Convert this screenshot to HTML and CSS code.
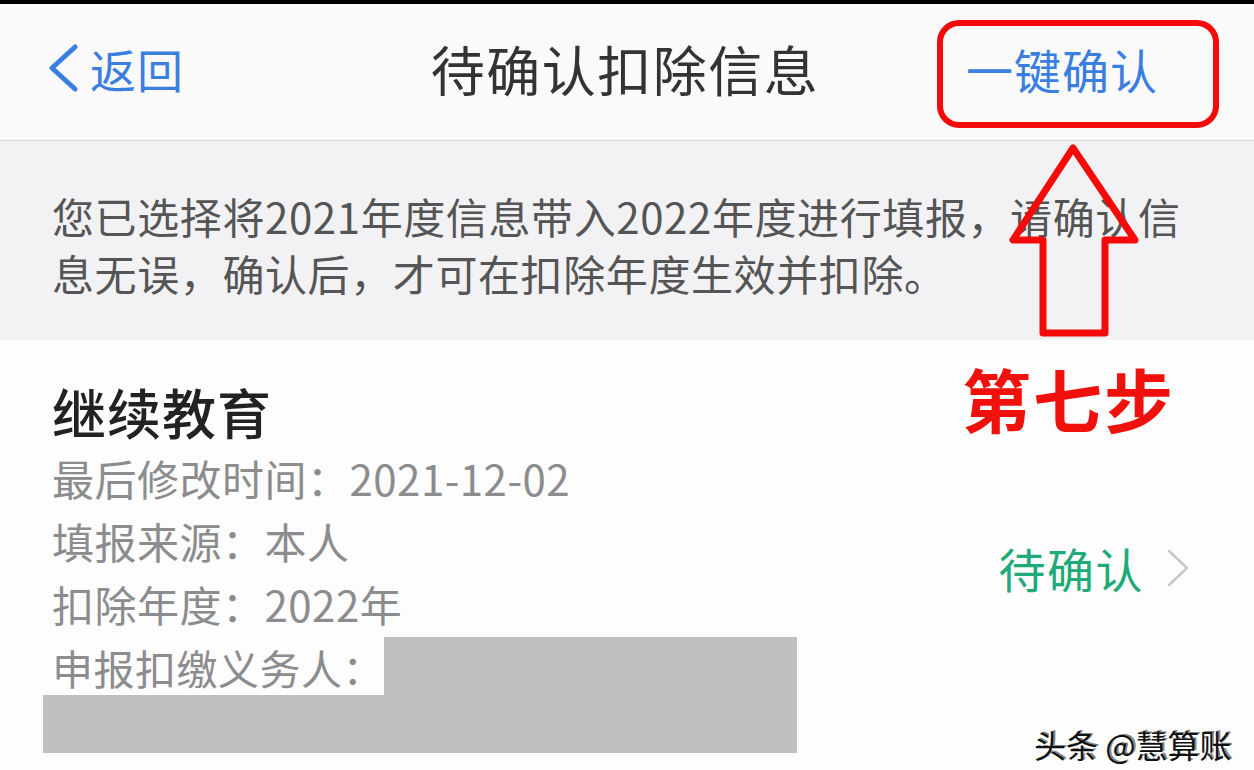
FILE: index.html
```html
<!DOCTYPE html>
<html>
    <head>
        <meta charset="utf-8">
        <title>待确认扣除信息</title>
        <link rel="stylesheet" href="styles.css">
    </head>
    <body>
        <div id="page">
            <div class="topband"></div>
            <div class="nav">
                <div class="back">
                    <svg class="back-icon" width="34" height="48" viewBox="0 0 34 48">
                        <path d="M29 3 L6 24 L29 45" fill="none" stroke="#3a7fe0" stroke-width="5" stroke-linecap="round" stroke-linejoin="round"/>
                    </svg>
                    <span>返回</span>
                </div>
                <div class="title">待确认扣除信息</div>
                <div class="confirm">一键确认</div>
            </div>
            <div class="notice">
                您已选择将2021年度信息带入2022年度进行填报，请确认信息无误，确认后，才可在扣除年度生效并扣除。
            </div>
            <div class="item">
                <div class="item-main">
                    <div class="item-name">继续教育</div>
                    <div class="row">最后修改时间：2021-12-02</div>
                    <div class="row">填报来源：本人</div>
                    <div class="row">扣除年度：2022年</div>
                    <div class="payer">
                        <div class="payer-line">
                            <span class="payer-label">申报扣缴义务人：</span>
                            <span class="mask"></span>
                        </div>
                        <div class="mask mask-low"></div>
                    </div>
                </div>
                <div class="status">
                    <span>待确认</span>
                    <svg width="24" height="38" viewBox="0 0 24 38">
                        <path d="M3 2 L21 19 L3 36" fill="none" stroke="#c8c8cc" stroke-width="2.5" stroke-linecap="round" stroke-linejoin="round"/>
                    </svg>
                </div>
            </div>

            <!-- annotations -->
            <div class="mark-box"></div>
            <svg class="mark-arrow" width="140" height="200" viewBox="0 0 140 200">
                <path d="M65 5 L5 97 L35 97 L35 190 L97 190 L97 97 L127 97 Z" fill="none" stroke="#f50a0a" stroke-width="7" stroke-linejoin="round"/>
            </svg>
            <div class="mark-step">第七步</div>
            <div class="watermark">头条 @慧算账</div>
        </div>
    </body>
</html>
```

FILE: styles.css
```css
*{
    margin:            0;
    padding:           0;
}
body{
    background:        #fdfdfd;
    font-family:       "Noto Sans CJK SC", "Noto Sans", sans-serif;
}
#page{
    position:          relative;
    width:             1254px;
    height:            770px;
    overflow:          hidden;
}
.topband{
    height:            4px;
    background:        #000;
}
.nav{
    height:            137px;
    box-sizing:        border-box;
    background:        #fafafb;
    border-bottom:     1px solid #d6d6d8;
    display:           grid;
    grid-template-columns: 1fr auto 1fr;
    align-items:       center;
    padding:           0 46px 8px 46px;
}
.back{
    display:           flex;
    align-items:       center;
    gap:               10px;
    color:             #3a7fe0;
    font-size:         46px;
}
.back span{
    letter-spacing:    1px;
}
.title{
    font-size:         54px;
    color:             #333;
    letter-spacing:    1.5px;
    margin-left:       -4px;
}
.confirm{
    justify-self:      end;
    margin-right:      50px;
    font-size:         47px;
    color:             #3a7fe0;
    letter-spacing:    1px;
}
.notice{
    background:        #f2f2f5;
    height:            199px;
    box-sizing:        border-box;
    padding:           46px 60px 0 52px;
    font-size:         42px;
    line-height:       57px;
    color:             #555;
    letter-spacing:    0.6px;
}
.item{
    display:           flex;
    justify-content:   space-between;
    padding:           38px 64px 0 52px;
}
.item-name{
    font-size:         54px;
    line-height:       68px;
    color:             #222;
    font-weight:       500;
    letter-spacing:    1px;
}
.row{
    font-size:         42px;
    line-height:       63px;
    color:             #8c8c8e;
    letter-spacing:    0.5px;
}
.payer{
    margin-top:        2px;
    margin-left:       -9px;
    width:             754px;
}
.payer-line{
    display:           flex;
    height:            58px;
}
.payer-label{
    background:        #fdfdfd;
    padding:           0 0 0 9px;
    font-size:         41px;
    line-height:       60px;
    color:             #8c8c8e;
    letter-spacing:    0.5px;
}
.mask{
    flex:              1;
    background:        #c0bfc0;
}
.mask-low{
    height:            58px;
}
.status{
    display:           flex;
    align-items:       center;
    gap:               22px;
    margin-top:        155px;
    align-self:        flex-start;
    font-size:         47px;
    color:             #1eaa79;
    letter-spacing:    1.5px;
}
.mark-box{
    position:          absolute;
    left:              937px;
    top:               20px;
    width:             282px;
    height:            108px;
    box-sizing:        border-box;
    border:            6px solid #f50a0a;
    border-radius:     22px;
}
.mark-arrow{
    position:          absolute;
    left:              1008px;
    top:               143px;
}
.mark-step{
    position:          absolute;
    left:              962px;
    top:               348px;
    font-size:         69px;
    font-weight:       bold;
    color:             #f0100c;
    letter-spacing:    2px;
}
.watermark{
    position:          absolute;
    left:              1034px;
    top:               721px;
    font-size:         32px;
    color:             #111;
    text-shadow:       -2px 2px 0 #fff, 2px -1px 0 #888;
}
```
